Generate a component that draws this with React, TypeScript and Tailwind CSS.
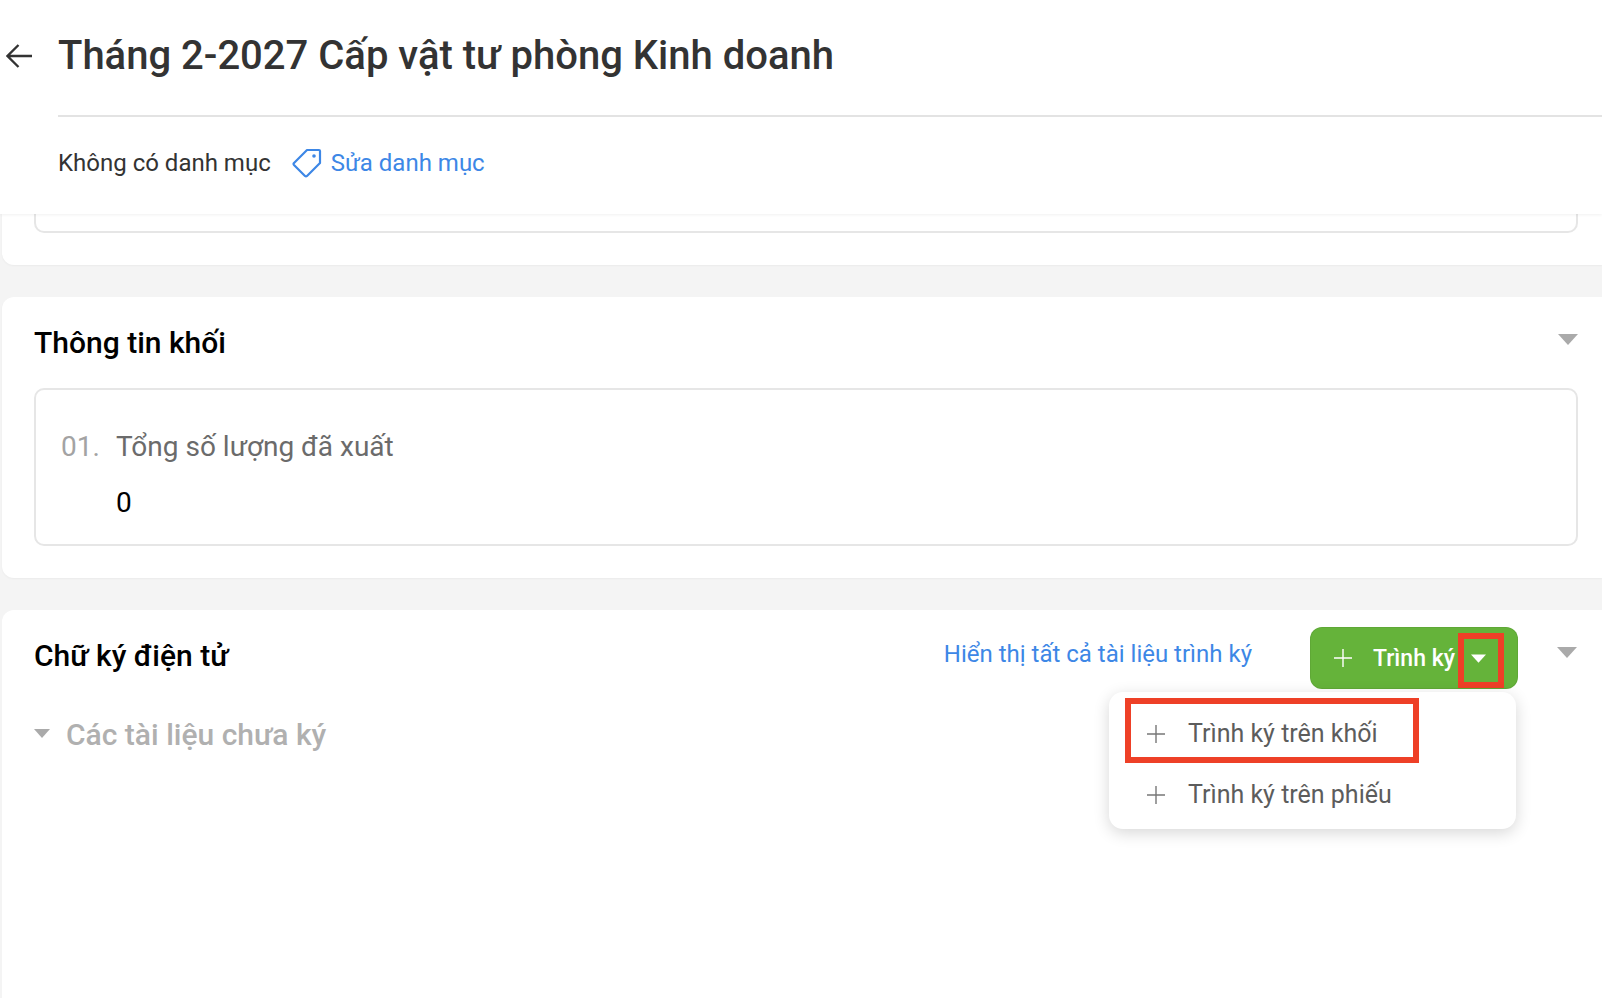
import React from "react";

const Plus = ({ className }: { className: string }) => (
  <svg viewBox="0 0 20 20" className={className} fill="none" stroke="currentColor" strokeWidth="1.4">
    <path d="M10 1v18M1 10h18" />
  </svg>
);

const Caret = ({ className }: { className: string }) => (
  <svg viewBox="0 0 20 11" className={className} fill="currentColor">
    <path d="M0 0h20L10 11z" />
  </svg>
);

export default function App() {
  return (
    <div className="h-[998px] w-[1602px] overflow-hidden bg-[#f4f4f4] font-['Roboto',sans-serif]">
      <header className="relative z-10 h-[214px] bg-white shadow-[0_1px_3px_rgba(0,0,0,0.06)]">
        <div className="ml-[58px] flex h-[117px] items-center border-b-2 border-[#e3e3e3] pb-[3px]">
          <svg viewBox="0 0 26 26" className="ml-[-52px] mr-[26px] h-[26px] w-[26px] text-[#333]" fill="none" stroke="currentColor" strokeWidth="2.3">
            <path d="M26 13H1.5M12.5 2 1.5 13l11 11" />
          </svg>
          <h1 className="text-[40px] font-medium leading-none text-[#333]">Tháng 2-2027 Cấp vật tư phòng Kinh doanh</h1>
        </div>
        <div className="ml-[58px] flex h-[91px] items-center text-[24px] leading-none">
          <span className="text-[#333]">Không có danh mục</span>
          <svg viewBox="0 0 30 30" className="ml-[21px] mr-[9px] h-[30px] w-[30px] text-[#3d87e6]" fill="none" stroke="currentColor" strokeWidth="2.2" strokeLinejoin="round">
            <path d="M15 2h12a1 1 0 0 1 1 1v12L15 28a1.5 1.5 0 0 1-2 0L2 17a1.5 1.5 0 0 1 0-2z" />
            <circle cx="22" cy="8" r="1.8" fill="currentColor" stroke="none" />
          </svg>
          <span className="text-[#3d87e6]">Sửa danh mục</span>
        </div>
      </header>

      <section className="ml-[2px] h-[51px] rounded-bl-[12px] bg-white pl-[32px] pr-[24px] shadow-[0_1px_2px_rgba(0,0,0,0.04)]">
        <div className="h-[19px] rounded-b-[10px] border-x-2 border-b-2 border-[#e6e6e6]" />
      </section>

      <section className="ml-[2px] mt-[32px] h-[281px] rounded-l-[12px] bg-white pl-[32px] pr-[24px] shadow-[0_1px_2px_rgba(0,0,0,0.04)]">
        <div className="flex h-[91px] items-center justify-between">
          <h2 className="text-[30px] font-medium leading-none text-black">Thông tin khối</h2>
          <Caret className="mb-[6px] h-[11px] w-[20px] text-[#aaaaaa]" />
        </div>
        <div className="h-[158px] rounded-[10px] border-2 border-[#e6e6e6] pl-[25px] pr-[26px] pt-[39px]">
          <div className="flex items-center text-[28px] leading-[36px]">
            <span className="w-[55px] text-[#a3a3a3]">01.</span>
            <span className="text-[#6b6b6b]">Tổng số lượng đã xuất</span>
          </div>
          <div className="ml-[55px] mt-[20px] text-[28px] leading-[36px] text-black">0</div>
        </div>
      </section>

      <section className="relative ml-[2px] mt-[32px] h-[388px] rounded-tl-[12px] bg-white pl-[32px] pr-[24px]">
        <div className="flex h-[90px] items-center">
          <h2 className="mt-[2px] text-[30px] font-medium leading-none text-black">Chữ ký điện tử</h2>
          <span className="ml-auto mb-[2px] text-[24px] leading-none text-[#3d87e6]">Hiển thị tất cả tài liệu trình ký</span>
          <div className="relative ml-[58px] mt-[6px] flex h-[62px] w-[208px] items-center rounded-[12px] bg-[#65b33a] pl-[23px] text-white shadow-[inset_0_0_0_1px_rgba(0,0,0,0.06)]">
            <Plus className="h-[20px] w-[20px]" />
            <span className="ml-[20px] text-[23px] font-medium leading-none">Trình ký</span>
            <Caret className="ml-[16px] h-[9px] w-[15px]" />
            <div className="absolute left-[148px] top-[6px] h-[55px] w-[46px] border-[6px] border-[#ee4027]" />
          </div>
          <Caret className="mb-[6px] ml-[39px] mr-[1px] h-[11px] w-[20px] text-[#aaaaaa]" />
        </div>
        <div className="mt-[15px] flex items-center">
          <Caret className="mb-[3px] h-[9px] w-[16px] text-[#aaaaaa]" />
          <span className="ml-[16px] text-[30px] font-medium leading-[40px] text-[#b0b0b0]">Các tài liệu chưa ký</span>
        </div>

        <div className="absolute left-[1107px] top-[82px] h-[137px] w-[407px] rounded-[14px] bg-white pl-[37px] pt-[11px] text-[25px] text-[#5c5c5c] shadow-[0_4px_16px_rgba(0,0,0,0.16)]">
          <div className="flex h-[61px] items-center">
            <Plus className="h-[20px] w-[20px] text-[#777]" />
            <span className="ml-[22px]">Trình ký trên khối</span>
          </div>
          <div className="flex h-[61px] items-center">
            <Plus className="h-[20px] w-[20px] text-[#777]" />
            <span className="ml-[22px]">Trình ký trên phiếu</span>
          </div>
          <div className="absolute left-[16px] top-[6px] h-[65px] w-[294px] border-[6px] border-[#ee4027]" />
        </div>
      </section>
    </div>
  );
}
